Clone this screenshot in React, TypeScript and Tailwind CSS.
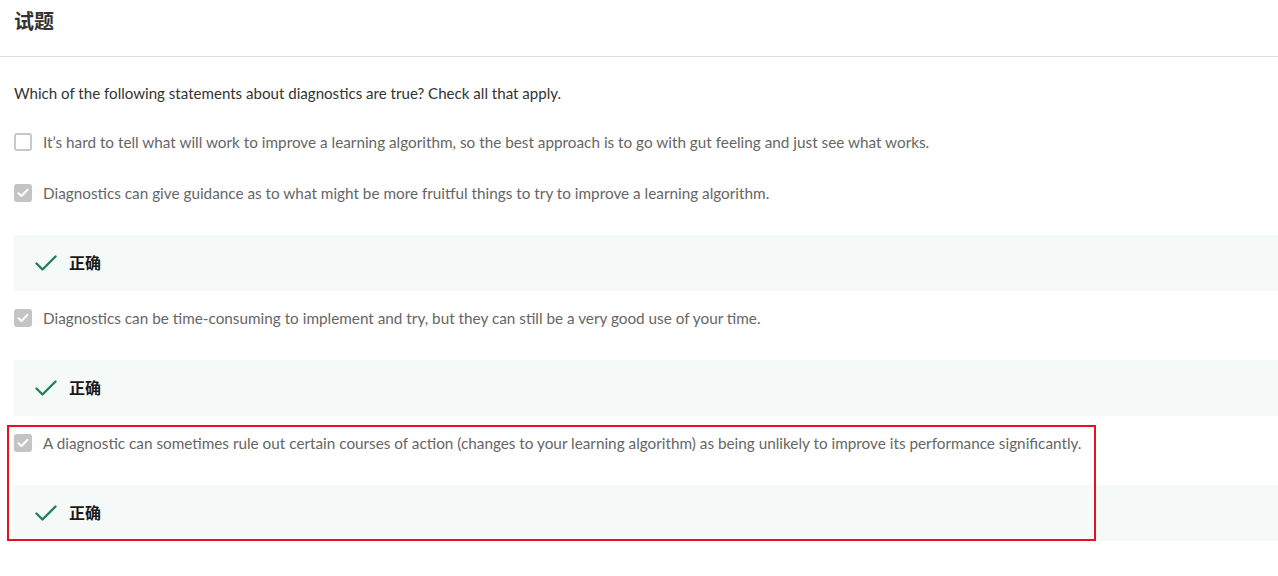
const options = [
  {
    text: "It’s hard to tell what will work to improve a learning algorithm, so the best approach is to go with gut feeling and just see what works.",
    checked: false,
  },
  {
    text: "Diagnostics can give guidance as to what might be more fruitful things to try to improve a learning algorithm.",
    checked: true,
  },
  {
    text: "Diagnostics can be time-consuming to implement and try, but they can still be a very good use of your time.",
    checked: true,
  },
  {
    text: "A diagnostic can sometimes rule out certain courses of action (changes to your learning algorithm) as being unlikely to improve its performance significantly.",
    checked: true,
  },
];

function CheckBox({ checked }: { checked: boolean }) {
  if (!checked) {
    return <span className="h-[18px] w-[18px] shrink-0 rounded-[3px] border-2 border-[#c8c8c8] bg-white" />;
  }
  return (
    <span className="flex h-[18px] w-[18px] shrink-0 items-center justify-center rounded-[3px] bg-[#c4c4c4]">
      <svg width="12" height="10" viewBox="0 0 12 10" fill="none">
        <path d="M1.5 5.2 4.5 8 10.5 1.8" stroke="white" strokeWidth="2" strokeLinecap="round" strokeLinejoin="round" />
      </svg>
    </span>
  );
}

function Correct() {
  return (
    <div className="flex h-[56px] items-center bg-[#f5f9f8] pl-[21px]">
      <svg width="22" height="18" viewBox="0 0 22 18" fill="none" className="-mt-[1px]">
        <path d="M1.5 9.5 7.5 15.5 20.5 2.5" stroke="#1f8354" strokeWidth="2.4" strokeLinecap="round" strokeLinejoin="round" />
      </svg>
      <span className="-mt-[3px] ml-[12px] text-[16px] font-bold leading-[20px] text-[#1a1a1a] [font-family:'Noto_Sans_CJK_SC',sans-serif]">
        正确
      </span>
    </div>
  );
}

export default function App() {
  return (
    <div className="relative h-[576px] w-[1278px] overflow-hidden bg-white [font-family:Lato,'Noto_Sans_CJK_SC',sans-serif]">
      <div className="flex h-[57px] items-start border-b border-[#e1e1e1] px-[14px] pt-[7px]">
        <h1 className="text-[20px] font-bold leading-[28px] text-[#333] [font-family:'Noto_Sans_CJK_SC',sans-serif]">
          试题
        </h1>
      </div>
      <div className="pl-[14px] pt-[25px]">
        <p className="text-[15.1px] leading-[22px] text-[#333]">
          Which of the following statements about diagnostics are true? Check all that apply.
        </p>
        <div className="mt-[28px]">
          {options.map((opt, idx) => (
            <div key={idx} className={idx === 1 ? "mt-[31px]" : idx > 1 ? "mt-[17px]" : ""}>
              <label className="flex h-[20px] items-center">
                <CheckBox checked={opt.checked} />
                <span className="ml-[11px] text-[15.3px] text-[#666]">{opt.text}</span>
              </label>
              {opt.checked && (
                <div className="mt-[32px]">
                  <Correct />
                </div>
              )}
            </div>
          ))}
        </div>
      </div>
      <div className="absolute left-[7px] top-[425px] h-[116px] w-[1089px] border-2 border-[#e81123]" />
    </div>
  );
}
